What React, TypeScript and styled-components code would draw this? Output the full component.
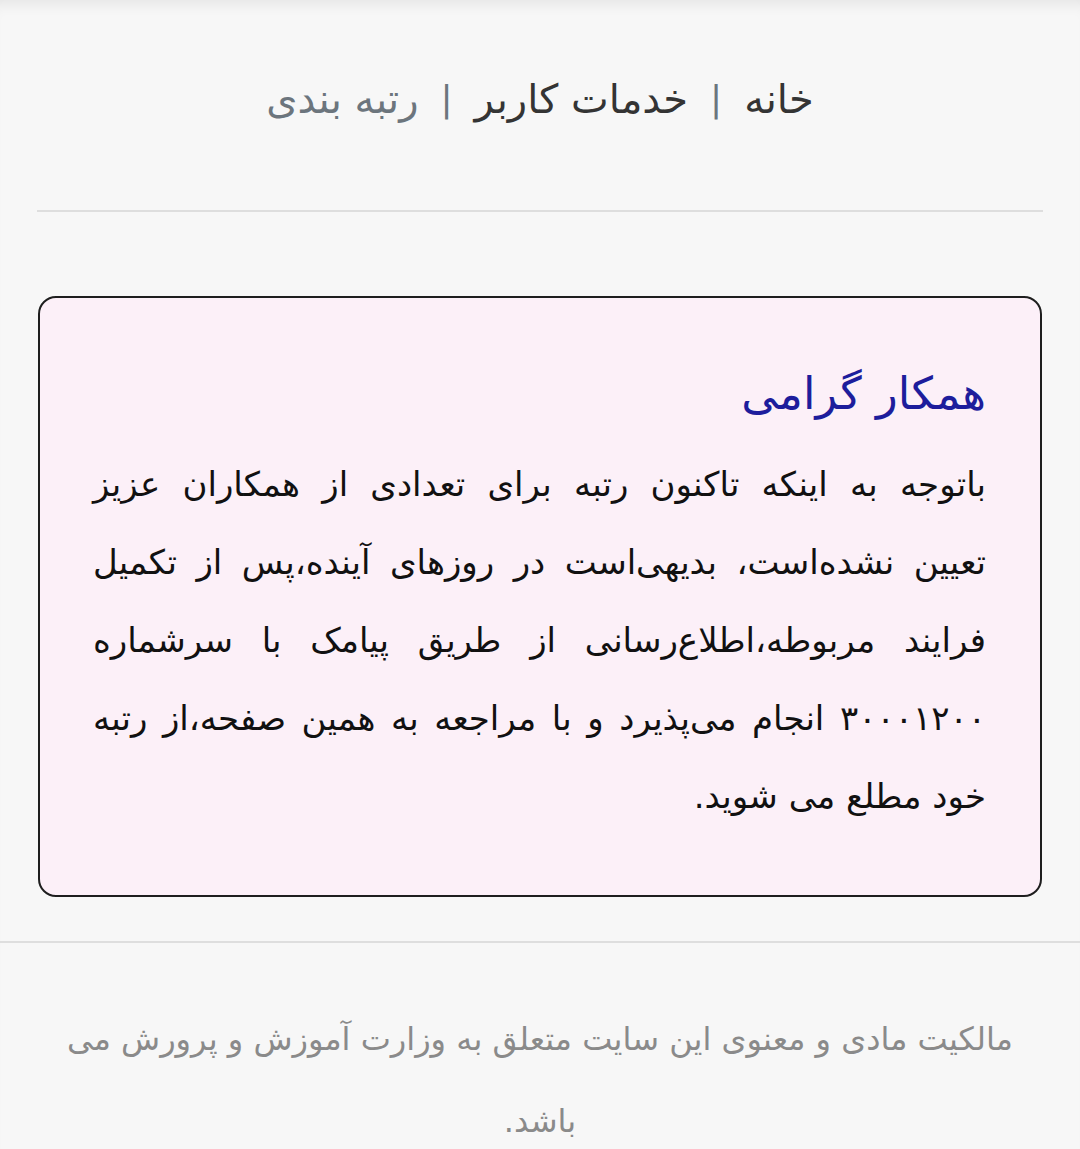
import styled, { createGlobalStyle } from "styled-components";

const GlobalStyle = createGlobalStyle`
  html, body {
    margin: 0;
    padding: 0;
    background: #f7f7f7;
  }
  body {
    font-family: "DejaVu Sans", sans-serif;
    direction: rtl;
  }
`;

const Page = styled.div`
  min-height: 1149px;
  background: #f7f7f7;
  box-shadow: inset 0 14px 14px -10px rgba(0, 0, 0, 0.08);
`;

const Header = styled.div`
  padding: 0 37px;
`;

const Breadcrumb = styled.nav`
  display: flex;
  justify-content: center;
  align-items: center;
  gap: 22px;
  height: 212px;
  padding-bottom: 12px;
  font-size: 40px;
  border-bottom: 2px solid #dedede;
  line-height: 1;
  box-sizing: border-box;
`;

const Crumb = styled.span<{ $active?: boolean }>`
  color: ${(p) => (p.$active ? "#6c757d" : "#343434")};
`;

const Divider = styled.span`
  color: #6c757d;
  font-size: 36px;
`;

const Main = styled.main`
  padding: 84px 38px 44px;
`;

const Card = styled.section`
  background: #fcf0f8;
  border: 2px solid #1e1e1e;
  border-radius: 18px;
  padding: 66px 54px 60px 53px;
`;

const Title = styled.h2`
  margin: 0 0 21px;
  font-size: 45px;
  font-weight: 400;
  line-height: 60px;
  color: #1d1d9c;
`;

const Body = styled.p`
  margin: 0;
  font-size: 34px;
  line-height: 78px;
  color: #111;
`;

const Line = styled.span<{ $last?: boolean }>`
  display: block;
  text-align: justify;
  text-align-last: ${(p) => (p.$last ? "start" : "justify")};
`;

const Footer = styled.footer`
  border-top: 2px solid #dedede;
  padding: 55px 60px 0;
  text-align: center;
  color: #8a8a8a;
  font-size: 32px;
  line-height: 82px;
`;

const lines = [
  "باتوجه به اینکه تاکنون رتبه برای تعدادی از همکاران عزیز",
  "تعیین نشده‌است، بدیهی‌است در روزهای آینده،پس از تکمیل",
  "فرایند مربوطه،اطلاع‌رسانی از طریق پیامک با سرشماره",
  "۳۰۰۰۱۲۰۰ انجام می‌پذیرد و با مراجعه به همین صفحه،از رتبه",
  "خود مطلع می شوید.",
];

export default function App() {
  return (
    <>
      <GlobalStyle />
      <Page>
        <Header>
          <Breadcrumb>
            <Crumb>خانه</Crumb>
            <Divider>|</Divider>
            <Crumb>خدمات کاربر</Crumb>
            <Divider>|</Divider>
            <Crumb $active>رتبه بندی</Crumb>
          </Breadcrumb>
        </Header>
        <Main>
          <Card>
            <Title>همکار گرامی</Title>
            <Body>
              {lines.map((text, i) => (
                <Line key={i} $last={i === lines.length - 1}>
                  {text}
                </Line>
              ))}
            </Body>
          </Card>
        </Main>
        <Footer>
          مالکیت مادی و معنوی این سایت متعلق به وزارت آموزش و پرورش می باشد.
        </Footer>
      </Page>
    </>
  );
}
